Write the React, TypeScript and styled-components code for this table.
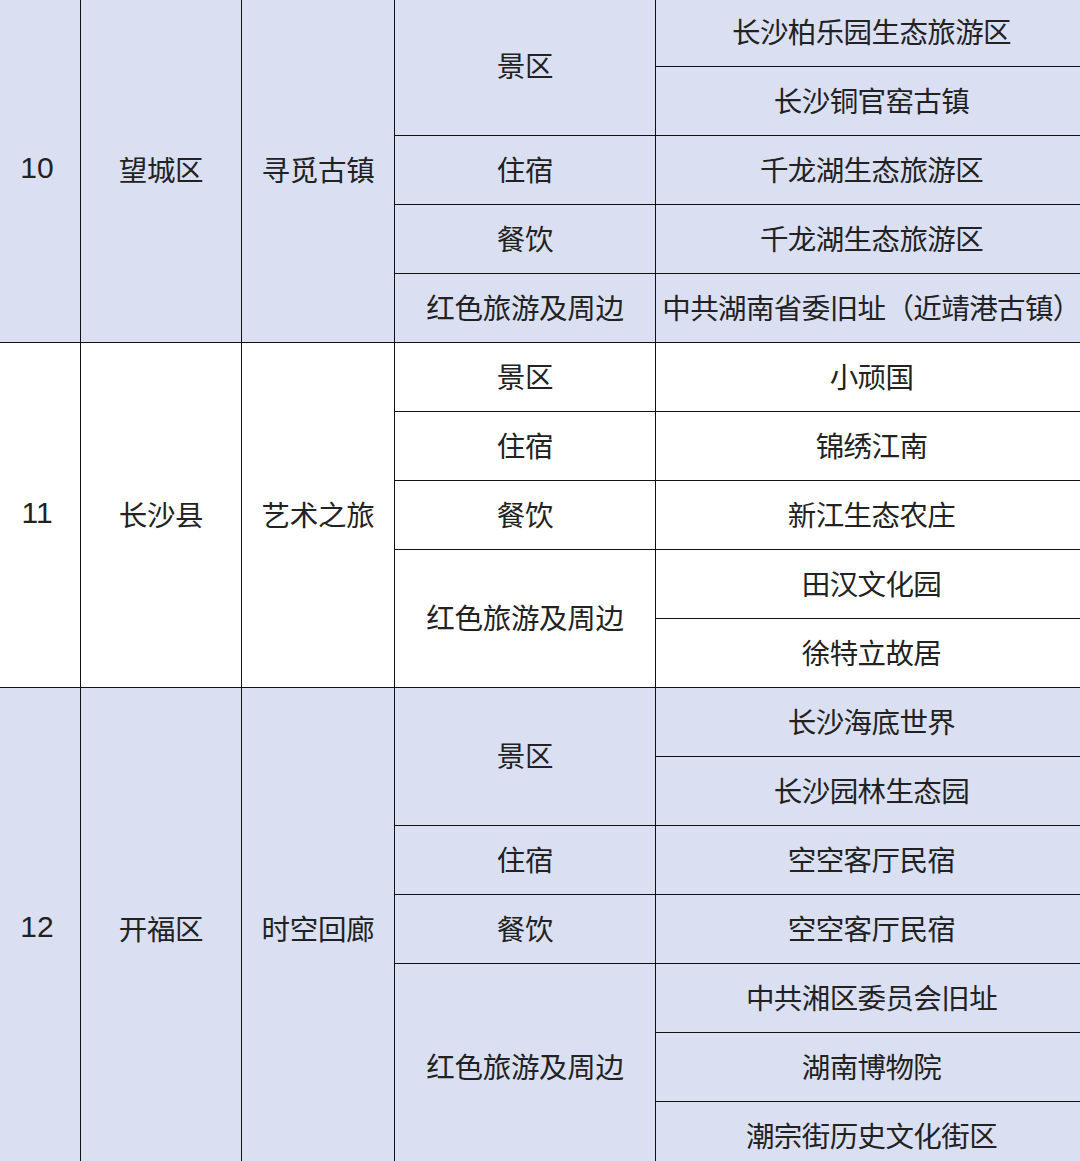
import React from "react";
import styled, { createGlobalStyle } from "styled-components";

const GlobalStyle = createGlobalStyle`
  html, body {
    margin: 0;
    padding: 0;
    background: #ffffff;
    overflow: hidden;
  }
`;

const Page = styled.div`
  width: 1080px;
  height: 1161px;
  overflow: hidden;
`;

const Table = styled.table`
  border-collapse: collapse;
  table-layout: fixed;
  width: 1082px;
  margin-top: -3px;
  margin-left: -1px;
  font-family: "Microsoft YaHei", "Noto Sans CJK SC", "Noto Sans", sans-serif;
  font-size: 28.5px;
  color: #222222;
`;

const Col = styled.col<{ $w: number }>`
  width: ${(p) => p.$w}px;
`;

const Cell = styled.td<{ $shade: boolean }>`
  border: 1px solid #111111;
  height: 69px;
  padding: 0 0 4px 0;
  box-sizing: border-box;
  text-align: center;
  vertical-align: middle;
  white-space: nowrap;
  overflow: visible;
  letter-spacing: -0.3px;
  background: ${(p) => (p.$shade ? "#dae0f2" : "#ffffff")};
`;

const PlaceCell = styled(Cell)`
  padding-left: 6px;
  letter-spacing: -0.6px;
`;

const NumCell = styled(Cell)`
  font-family: "Liberation Sans", Arial, sans-serif;
  font-size: 30px;
  letter-spacing: 0;
  padding-right: 6px;
`;

type Item = { kind: string; places: string[] };
type Group = { no: string; district: string; theme: string; items: Item[]; shade: boolean };

const groups: Group[] = [
  {
    no: "10",
    district: "望城区",
    theme: "寻觅古镇",
    shade: true,
    items: [
      { kind: "景区", places: ["长沙柏乐园生态旅游区", "长沙铜官窑古镇"] },
      { kind: "住宿", places: ["千龙湖生态旅游区"] },
      { kind: "餐饮", places: ["千龙湖生态旅游区"] },
      { kind: "红色旅游及周边", places: ["中共湖南省委旧址（近靖港古镇）"] },
    ],
  },
  {
    no: "11",
    district: "长沙县",
    theme: "艺术之旅",
    shade: false,
    items: [
      { kind: "景区", places: ["小顽国"] },
      { kind: "住宿", places: ["锦绣江南"] },
      { kind: "餐饮", places: ["新江生态农庄"] },
      { kind: "红色旅游及周边", places: ["田汉文化园", "徐特立故居"] },
    ],
  },
  {
    no: "12",
    district: "开福区",
    theme: "时空回廊",
    shade: true,
    items: [
      { kind: "景区", places: ["长沙海底世界", "长沙园林生态园"] },
      { kind: "住宿", places: ["空空客厅民宿"] },
      { kind: "餐饮", places: ["空空客厅民宿"] },
      { kind: "红色旅游及周边", places: ["中共湘区委员会旧址", "湖南博物院", "潮宗街历史文化街区"] },
    ],
  },
];

const GroupRows = ({ g }: { g: Group }) => {
  const total = g.items.reduce((n, it) => n + it.places.length, 0);
  const rows: React.ReactNode[] = [];
  let first = true;
  g.items.forEach((it, i) => {
    it.places.forEach((place, j) => {
      rows.push(
        <tr key={`${i}-${j}`}>
          {first && (
            <>
              <NumCell $shade={g.shade} rowSpan={total}>{g.no}</NumCell>
              <Cell $shade={g.shade} rowSpan={total}>{g.district}</Cell>
              <Cell $shade={g.shade} rowSpan={total}>{g.theme}</Cell>
            </>
          )}
          {j === 0 && (
            <Cell $shade={g.shade} rowSpan={it.places.length}>{it.kind}</Cell>
          )}
          <PlaceCell $shade={g.shade}>{place}</PlaceCell>
        </tr>
      );
      first = false;
    });
  });
  return <>{rows}</>;
};

export default function App() {
  return (
    <Page>
      <GlobalStyle />
      <Table>
        <colgroup>
          <Col $w={81} />
          <Col $w={161} />
          <Col $w={153} />
          <Col $w={261} />
          <Col $w={426} />
        </colgroup>
        <tbody>
          {groups.map((g) => (
            <GroupRows key={g.no} g={g} />
          ))}
        </tbody>
      </Table>
    </Page>
  );
}
